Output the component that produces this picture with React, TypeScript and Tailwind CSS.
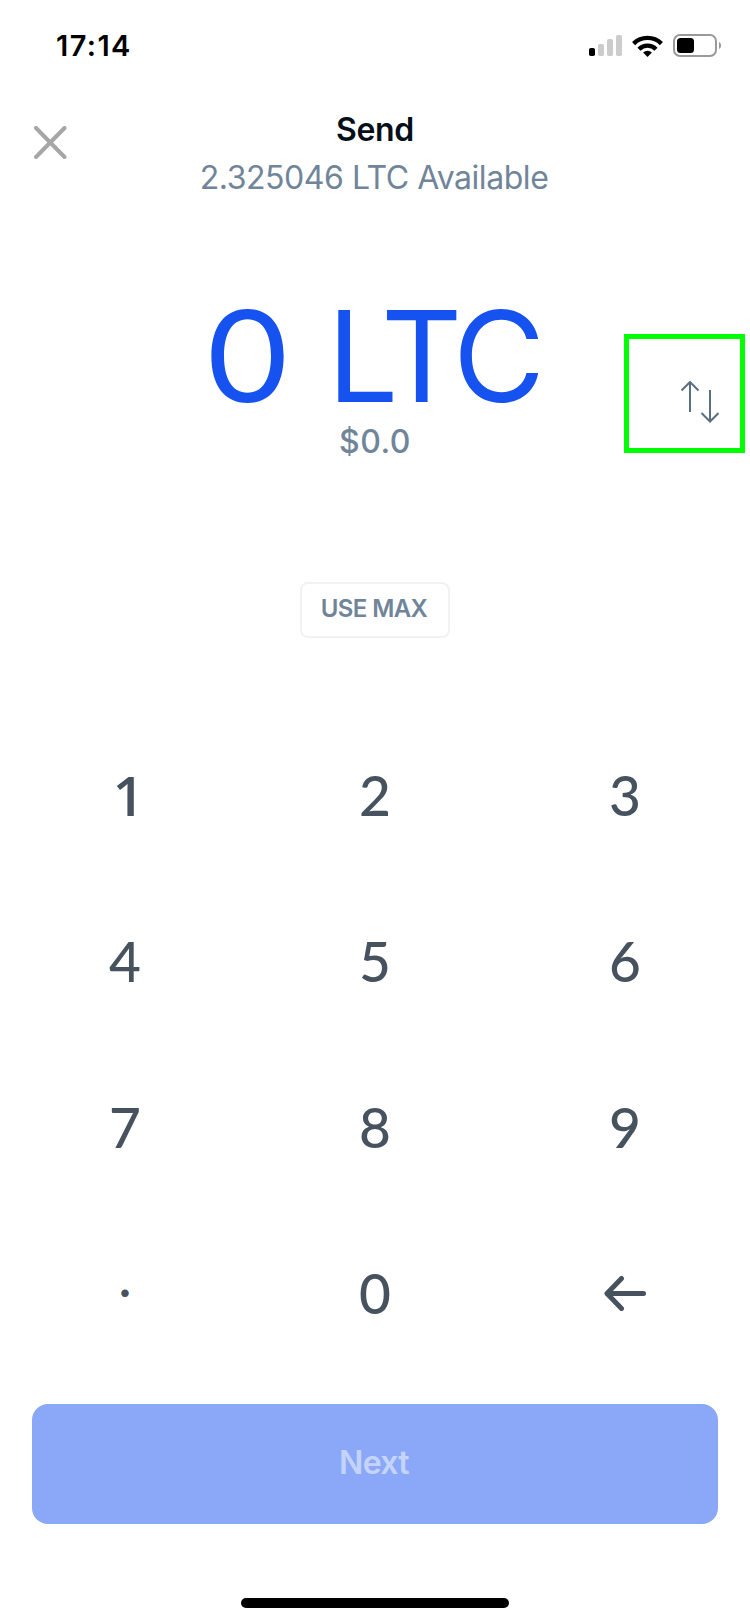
import React, { useState } from 'react';

const KEYS = ['1', '2', '3', '4', '5', '6', '7', '8', '9', '·', '0', 'back'];

// Optical adjustments for single keys
const KEY_STYLES: Record<string, string> = {
  '1': "font-['Open_Sans',sans-serif] font-[540] pl-[7px] pb-[3px]",
  '·': 'pb-[8px] text-[47px]'
};

const SignalIcon = () => (
  <svg width="33" height="21" viewBox="0 0 33 21">
    <rect x="0" y="13" width="6" height="8" rx="1.8" fill="#000" />
    <rect x="9" y="9" width="6" height="12" rx="1.8" fill="#ccc" />
    <rect x="18" y="4" width="6" height="17" rx="1.8" fill="#ccc" />
    <rect x="27" y="0" width="6" height="21" rx="1.8" fill="#ccc" />
  </svg>
);

const WifiIcon = () => (
  <svg width="31" height="22" viewBox="0 0 31 22" fill="none" stroke="#000" strokeWidth="4.4">
    <path d="M1.6 8.6a19.7 19.7 0 0 1 27.8 0" />
    <path d="M7 14.2a12 12 0 0 1 17 0" />
    <path d="M15.5 22l-4.4-4.5a6.2 6.2 0 0 1 8.8 0z" fill="#000" stroke="none" />
  </svg>
);

const BatteryIcon = () => (
  <svg width="48" height="23" viewBox="0 0 48 23">
    <rect x="1" y="1" width="42" height="21" rx="6" fill="none" stroke="#999" strokeWidth="2" />
    <rect x="4" y="4" width="17" height="15" rx="3.5" fill="#000" />
    <path d="M46 8c2.7 1.4 2.7 5.6 0 7z" fill="#999" />
  </svg>
);

const StatusBar = () => (
  <div className="flex h-[91px] items-center justify-between pl-[56px] pr-[29px]">
    <span className="text-[29px] font-semibold leading-none tracking-[1.4px] text-black">17:14</span>
    <div className="flex items-center">
      <SignalIcon />
      <div className="ml-[10px]"><WifiIcon /></div>
      <div className="ml-[10px]"><BatteryIcon /></div>
    </div>
  </div>
);

const Header = () => (
  <div className="grid grid-cols-[150px_1fr_150px] pt-[15px]">
    <button className="flex items-start pl-[34px] pt-[20px]" aria-label="Close">
      <svg width="33" height="33" viewBox="0 0 33 33" stroke="#a6a6a6" strokeWidth="4" strokeLinecap="round">
        <path d="M2 2l28.5 29M30.5 2L2 31" />
      </svg>
    </button>
    <div className="text-center text-[32px]">
      <h1 className="h-12 font-semibold leading-[48px] tracking-[-0.3px] text-[#050f1a]">Send</h1>
      <p className="h-12 whitespace-nowrap pr-0.5 font-normal leading-[48px] tracking-[-0.45px] text-[#708599]">
        2.325046 LTC Available
      </p>
    </div>
  </div>
);

const App: React.FC = () => {
  const [amount] = useState<string>('0');

  return (
    <div className="flex h-[1624px] w-[750px] flex-col overflow-hidden bg-white font-['Inter',sans-serif]">
      <StatusBar />
      <Header />

      {/* Amount */}
      <div className="mt-[90px] grid h-[171px] grid-cols-[126px_1fr_126px]">
        <div />
        <div className="text-center">
          <div className="h-32 whitespace-nowrap text-[126px] font-[370] leading-[128px] text-[#1652f0]">
            <span className="inline-block origin-left scale-x-112">{amount}</span>{' '}
            <span className="ml-[9px] mr-[7px] tracking-[-5.5px]">LTC</span>
          </div>
          <div className="h-[43px] text-[32px] font-medium leading-[43px] tracking-[0.5px] text-[#708599]">$0.0</div>
        </div>
        <button
          className="mt-[42px] flex h-[119px] w-[121px] items-start border-[5px] border-[#00ff00] pl-[52px] pt-[42px]"
          aria-label="Swap currency"
        >
          <svg width="38" height="42" viewBox="0 0 38 42" fill="none" stroke="#5b6f82" strokeWidth="2">
            <path d="M9 31V1M0.5 9.5L9 1l8.5 8.5" />
            <path d="M29 9v31M20.5 32l8.5 8.5 8.5-8.5" />
          </svg>
        </button>
      </div>

      <button className="mt-[119px] h-14 w-[150px] self-center rounded-lg border-2 border-[#f2f2f2] pb-[2px] pr-[2px] text-[24px] font-semibold leading-none tracking-[-0.6px] text-[#708599]">
        USE MAX
      </button>

      {/* Keypad */}
      <div className="mt-[75px] grid grid-cols-3 font-['Lato',sans-serif] text-[55px] font-medium text-[#47525f]">
        {KEYS.map((key) => (
          <button key={key} className="flex h-[166px] items-center justify-center pb-px leading-none">
            {key === 'back' ? (
              <svg width="42" height="35" viewBox="0 0 42 35" fill="none" stroke="#47525f" strokeWidth="5" strokeLinecap="round" strokeLinejoin="round">
                <path d="M39.5 17.5H3M17.5 2.5L3 17.5l14.5 15" />
              </svg>
            ) : (
              <span className={KEY_STYLES[key]}>{key}</span>
            )}
          </button>
        ))}
      </div>

      <button className="mx-8 mt-[27px] h-[120px] rounded-[16px] bg-[#8ba8f8] pb-[2px] pr-[2px] text-[32px] font-semibold leading-none tracking-[-0.7px] text-[#c5d4fc]">
        Next
      </button>

      <div className="mt-[74px] h-[10px] w-[268px] self-center rounded-full bg-black" />
    </div>
  );
};

export default App;
